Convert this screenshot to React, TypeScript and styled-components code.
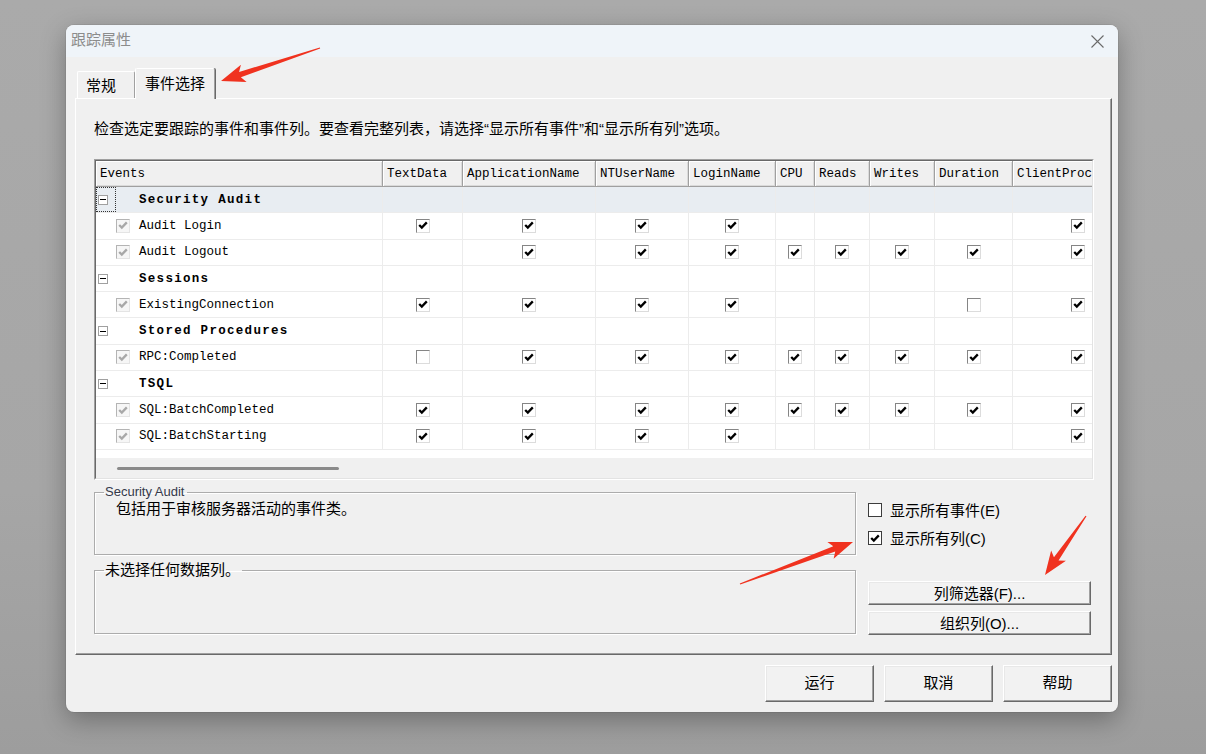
import React, { FC } from 'react'
import styled, { createGlobalStyle, css } from 'styled-components'

const GlobalStyle = createGlobalStyle`
  html, body {
    margin: 0;
    padding: 0;
  }
  body {
    width: 1206px;
    height: 754px;
    overflow: hidden;
    background: #a7a7a7;
    font-family: "Liberation Sans", "Noto Sans CJK SC", sans-serif;
  }
`

const Page = styled.div`
  position: relative;
  width: 1206px;
  height: 754px;
  box-sizing: border-box;
  padding: 25px 0 0 66px;
  background: linear-gradient(180deg, #aaaaaa 0%, #a6a6a6 65%, #9d9d9d 100%);
`

const Dialog = styled.div`
  width: 1052px;
  height: 687px;
  border-radius: 8px;
  background: #f0f0f0;
  box-shadow: 0 8px 26px rgba(0, 0, 0, 0.3), 0 0 0 1px rgba(0, 0, 0, 0.06);
  overflow: hidden;
  display: flex;
  flex-direction: column;
`

const TitleBar = styled.div`
  height: 32px;
  flex-shrink: 0;
  background: #eff4f9;
  display: flex;
  align-items: center;
  justify-content: space-between;
  padding: 0 14px 0 5px;
`

const Title = styled.span`
  font-size: 15px;
  color: #8c8c8c;
  padding-bottom: 5px;
`

const Body = styled.div`
  flex: 1;
  display: flex;
  flex-direction: column;
  padding: 11px 6px 0 9px;
`

const TabStrip = styled.div`
  display: flex;
  align-items: flex-end;
  height: 31px;
  padding-left: 2px;
  margin-bottom: -1px;
  position: relative;
  z-index: 1;
`

const Tab = styled.div<{ $active?: boolean }>`
  box-sizing: border-box;
  display: flex;
  align-items: center;
  font-size: 15px;
  color: #000;
  background: #f0f0f0;
  border-top: 1px solid #fff;
  border-left: 1px solid #fff;
  border-right: 1px solid #a0a0a0;
  border-radius: 2px 2px 0 0;

  ${p => p.$active ? css`
    height: 31px;
    width: 80px;
    justify-content: center;
    padding-bottom: 4px;
    box-shadow: 1px 0 0 #696969;
  ` : css`
    height: 27px;
    width: 58px;
    margin-bottom: 1px;
    padding-left: 8px;
    padding-bottom: 2px;
  `}
`

const Panel = styled.div`
  box-sizing: border-box;
  width: 1037px;
  height: 557px;
  border: 1px solid;
  border-color: #fff #696969 #696969 #fff;
  box-shadow: inset -1px -1px 0 #a0a0a0;
  padding: 21px 18px 0 18px;
  display: flex;
  flex-direction: column;
`

const Hint = styled.div`
  font-size: 15px;
  line-height: 18px;
  color: #000;
  white-space: nowrap;
`

const GridFrame = styled.div`
  box-sizing: border-box;
  width: 1000px;
  height: 321px;
  margin-top: 21px;
  border: 1px solid;
  border-color: #a0a0a0 #fff #fff #a0a0a0;
  display: flex;
`

const GridInner = styled.div`
  flex: 1;
  border: 1px solid;
  border-color: #696969 #e3e3e3 #e3e3e3 #696969;
  background: #fff;
  overflow: hidden;
  display: flex;
  flex-direction: column;
`

const COLUMNS = [
  { name: 'Events', width: 287 },
  { name: 'TextData', width: 80 },
  { name: 'ApplicationName', width: 133 },
  { name: 'NTUserName', width: 93 },
  { name: 'LoginName', width: 87 },
  { name: 'CPU', width: 39 },
  { name: 'Reads', width: 55 },
  { name: 'Writes', width: 65 },
  { name: 'Duration', width: 78 },
  { name: 'ClientProcessID', width: 130 },
]

const TEMPLATE = COLUMNS.map(c => `${c.width}px`).join(' ')

const HeadRow = styled.div`
  display: grid;
  grid-template-columns: ${TEMPLATE};
  flex-shrink: 0;
  background: #f0f0f0;
`

const HeadCell = styled.div`
  box-sizing: border-box;
  height: 26px;
  border-right: 1px solid #a0a0a0;
  border-bottom: 1px solid #a0a0a0;
  box-shadow: inset 1px 1px 0 #fff, inset -1px -1px 0 #dadada;
  padding: 1px 0 0 4px;
  display: flex;
  align-items: center;
  font: 12.5px "Liberation Mono", monospace;
  color: #000;
  white-space: nowrap;
  overflow: hidden;
`

const RowsArea = styled.div`
  flex: 1;
  background: #fff;
`

const Row = styled.div<{ $selected?: boolean }>`
  display: grid;
  grid-template-columns: ${TEMPLATE};
  height: 26.3px;
  background: ${p => (p.$selected ? '#e8edf2' : '#fff')};
`

const Cell = styled.div`
  box-sizing: border-box;
  border-right: 1px solid #ececec;
  border-bottom: 1px solid #ececec;
  display: flex;
  align-items: center;
  justify-content: center;
  overflow: hidden;
`

const EventCell = styled(Cell)`
  justify-content: flex-start;
`

const IndentSlot = styled.div<{ $focused?: boolean }>`
  box-sizing: border-box;
  width: 20px;
  height: 100%;
  flex-shrink: 0;
  display: flex;
  align-items: center;
  padding-left: 2px;
  ${p => p.$focused && css`
    outline: 1px dotted #333;
    outline-offset: -1px;
  `}
`

const Expander = styled.span`
  box-sizing: border-box;
  width: 10px;
  height: 10px;
  border: 1px solid #a0a0a0;
  background: #fff;
  display: flex;
  align-items: center;
  justify-content: center;

  &::after {
    content: '';
    width: 6px;
    height: 1px;
    background: #000;
  }
`

const CheckSlot = styled.div`
  width: 14px;
  flex-shrink: 0;
  margin-right: 9px;
  display: flex;
`

const EventName = styled.span<{ $category?: boolean }>`
  font: 12.5px "Liberation Mono", monospace;
  color: #000;
  white-space: nowrap;
  ${p => p.$category && css`
    font-weight: bold;
    letter-spacing: 1.3px;
  `}
`

const GridCheck = styled.span<{ $disabled?: boolean }>`
  box-sizing: border-box;
  width: 14px;
  height: 14px;
  border: 1px solid;
  border-color: ${p => (p.$disabled ? '#b4b4b4 #e4e4e4 #e4e4e4 #b4b4b4' : '#858585 #dcdcdc #dcdcdc #858585')};
  background: ${p => (p.$disabled ? '#f6f6f6' : '#fff')};
  display: flex;
  align-items: center;
  justify-content: center;
`

const ScrollArea = styled.div`
  height: 20px;
  flex-shrink: 0;
  background: #f0f0f0;
  display: flex;
  align-items: center;
`

const ScrollThumb = styled.div`
  margin-left: 21px;
  width: 222px;
  height: 3px;
  border-radius: 2px;
  background: #8a8a8a;
`

const BottomSection = styled.div`
  display: flex;
  gap: 12px;
  margin-top: 5px;
`

const Groups = styled.div`
  width: 762px;
  display: flex;
  flex-direction: column;
  gap: 6px;
`

const GroupBox = styled.fieldset<{ $height: number }>`
  box-sizing: border-box;
  margin: 0;
  height: ${p => p.$height}px;
  padding: 0 0 0 9px;
  border: 1px solid #acacac;
  box-shadow: 1px 1px 0 #fff, inset 1px 1px 0 #fff;
  min-inline-size: auto;
`

const GroupLegend = styled.legend<{ $latin?: boolean }>`
  padding: 0 2px 0 1px;
  color: ${p => (p.$latin ? '#34394a' : '#000')};
  font-size: ${p => (p.$latin ? '13px' : '15px')};
  line-height: ${p => (p.$latin ? '14px' : '18px')};
`

const GroupText = styled.div`
  margin: 1px 0 0 12px;
  font-size: 15px;
  line-height: 18px;
  color: #000;
`

const Options = styled.div`
  width: 223px;
  display: flex;
  flex-direction: column;
  padding-top: 15px;
`

const OptionRow = styled.label`
  display: flex;
  align-items: center;
  gap: 8px;
  height: 20px;
  font-size: 15px;
  color: #000;

  & + & {
    margin-top: 8px;
  }
`

const OptionText = styled.span`
  padding-bottom: 2px;
`

const FormCheck = styled.span`
  box-sizing: border-box;
  width: 14px;
  height: 14px;
  border: 1px solid #3c3c3c;
  background: #fff;
  display: flex;
  align-items: center;
  justify-content: center;
`

const SideButtons = styled.div`
  display: flex;
  flex-direction: column;
  gap: 6px;
  margin-top: 33px;
`

const Button = styled.div<{ $height: number; $width?: number }>`
  box-sizing: border-box;
  height: ${p => p.$height}px;
  width: ${p => (p.$width ? `${p.$width}px` : '100%')};
  background: #f2f2f2;
  border: 1px solid;
  border-color: #fff #696969 #696969 #fff;
  box-shadow: inset -1px -1px 0 #a0a0a0, inset 1px 1px 0 #e8e8e8;
  padding-bottom: ${p => (p.$height > 30 ? 4 : 2)}px;
  display: flex;
  align-items: center;
  justify-content: center;
  font-size: 15px;
  color: #000;
`

const Footer = styled.div`
  display: flex;
  justify-content: flex-end;
  gap: 10px;
  margin-top: 10px;
`

const Overlay = styled.svg`
  position: absolute;
  left: 0;
  top: 0;
  pointer-events: none;
`

type Mark = 1 | 0 | null

type TreeRow =
  | { kind: 'category'; label: string; selected?: boolean }
  | { kind: 'event'; label: string; marks: Mark[] }

const ROWS: TreeRow[] = [
  { kind: 'category', label: 'Security Audit', selected: true },
  { kind: 'event', label: 'Audit Login', marks: [1, 1, 1, 1, null, null, null, null, 1] },
  { kind: 'event', label: 'Audit Logout', marks: [null, 1, 1, 1, 1, 1, 1, 1, 1] },
  { kind: 'category', label: 'Sessions' },
  { kind: 'event', label: 'ExistingConnection', marks: [1, 1, 1, 1, null, null, null, 0, 1] },
  { kind: 'category', label: 'Stored Procedures' },
  { kind: 'event', label: 'RPC:Completed', marks: [0, 1, 1, 1, 1, 1, 1, 1, 1] },
  { kind: 'category', label: 'TSQL' },
  { kind: 'event', label: 'SQL:BatchCompleted', marks: [1, 1, 1, 1, 1, 1, 1, 1, 1] },
  { kind: 'event', label: 'SQL:BatchStarting', marks: [1, 1, 1, 1, null, null, null, null, 1] },
]

const Tick: FC<{ color?: string }> = ({ color = '#000' }) => (
  <svg width="10" height="9" viewBox="0 0 10 9">
    <path d="M1.2 4 L3.8 6.6 L8.8 1.4" stroke={color} strokeWidth="2.3" fill="none" />
  </svg>
)

const CloseIcon = () => (
  <svg width="13" height="13" viewBox="0 0 13 13">
    <path d="M0.5 0.5 L12.5 12.5 M12.5 0.5 L0.5 12.5" stroke="#6a6a6a" strokeWidth="1.1" />
  </svg>
)

const arrowPoints = (x1: number, y1: number, x2: number, y2: number) => {
  const len = Math.hypot(x2 - x1, y2 - y1)
  const ux = (x2 - x1) / len
  const uy = (y2 - y1) / len
  const at = (t: number, s: number) => `${x1 + ux * t - uy * s},${y1 + uy * t + ux * s}`
  const head = Math.min(24, len * 0.33)
  return [
    at(0, 0.6),
    at(len - head + 4, 2.8),
    at(len - head, 9),
    at(len, 0),
    at(len - head, -9),
    at(len - head + 4, -2.8),
    at(0, -0.6),
  ].join(' ')
}

const ARROWS = [
  [320, 48, 221, 81],
  [740, 584, 853, 542],
  [1086, 516, 1045, 575],
]

const App: FC = () => {
  return (
    <Page>
      <GlobalStyle />
      <Dialog>
        <TitleBar>
          <Title>跟踪属性</Title>
          <CloseIcon />
        </TitleBar>

        <Body>
          <TabStrip>
            <Tab>常规</Tab>
            <Tab $active>事件选择</Tab>
          </TabStrip>

          <Panel>
            <Hint>检查选定要跟踪的事件和事件列。要查看完整列表，请选择“显示所有事件”和“显示所有列”选项。</Hint>

            <GridFrame>
              <GridInner>
                <HeadRow>
                  {COLUMNS.map(col => (
                    <HeadCell key={col.name}>{col.name}</HeadCell>
                  ))}
                </HeadRow>

                <RowsArea>
                  {ROWS.map(row => (
                    <Row key={row.label} $selected={row.kind === 'category' && row.selected}>
                      <EventCell>
                        <IndentSlot $focused={row.kind === 'category' && row.selected}>
                          {row.kind === 'category' && <Expander />}
                        </IndentSlot>
                        <CheckSlot>
                          {row.kind === 'event' && (
                            <GridCheck $disabled>
                              <Tick color="#a8a8a8" />
                            </GridCheck>
                          )}
                        </CheckSlot>
                        <EventName $category={row.kind === 'category'}>{row.label}</EventName>
                      </EventCell>

                      {COLUMNS.slice(1).map((col, index) => {
                        const mark = row.kind === 'event' ? row.marks[index] : null
                        return (
                          <Cell key={col.name}>
                            {mark !== null && (
                              <GridCheck>{mark === 1 && <Tick />}</GridCheck>
                            )}
                          </Cell>
                        )
                      })}
                    </Row>
                  ))}
                </RowsArea>

                <ScrollArea>
                  <ScrollThumb />
                </ScrollArea>
              </GridInner>
            </GridFrame>

            <BottomSection>
              <Groups>
                <GroupBox $height={70}>
                  <GroupLegend $latin>Security Audit</GroupLegend>
                  <GroupText>包括用于审核服务器活动的事件类。</GroupText>
                </GroupBox>
                <GroupBox $height={73}>
                  <GroupLegend>未选择任何数据列。</GroupLegend>
                </GroupBox>
              </Groups>

              <Options>
                <OptionRow>
                  <FormCheck />
                  <OptionText>显示所有事件(E)</OptionText>
                </OptionRow>
                <OptionRow>
                  <FormCheck>
                    <Tick />
                  </FormCheck>
                  <OptionText>显示所有列(C)</OptionText>
                </OptionRow>

                <SideButtons>
                  <Button $height={24}>列筛选器(F)...</Button>
                  <Button $height={24}>组织列(O)...</Button>
                </SideButtons>
              </Options>
            </BottomSection>
          </Panel>

          <Footer>
            <Button $height={37} $width={109}>运行</Button>
            <Button $height={37} $width={109}>取消</Button>
            <Button $height={37} $width={109}>帮助</Button>
          </Footer>
        </Body>
      </Dialog>

      <Overlay width="1206" height="754" viewBox="0 0 1206 754">
        {ARROWS.map(([x1, y1, x2, y2]) => (
          <polygon key={`${x1}-${y1}`} points={arrowPoints(x1, y1, x2, y2)} fill="#f0321f" />
        ))}
      </Overlay>
    </Page>
  )
}

export default App
